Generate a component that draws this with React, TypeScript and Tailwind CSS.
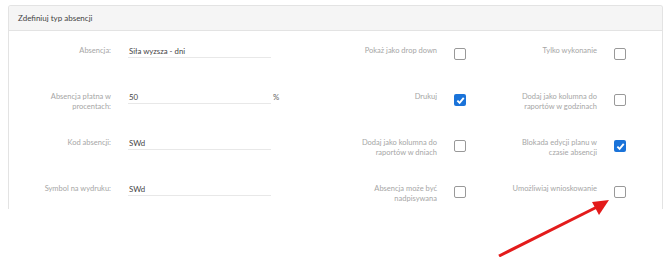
import React from "react";

type Check = { label: string[]; checked?: boolean };

type Row = {
  label: string[];
  value: string;
  suffix?: string;
  mid: Check;
  right: Check;
};

const rows: Row[] = [
  {
    label: ["Absencja:"],
    value: "Siła wyzsza - dni",
    mid: { label: ["Pokaż jako drop down"] },
    right: { label: ["Tylko wykonanie"] },
  },
  {
    label: ["Absencja płatna w", "procentach:"],
    value: "50",
    suffix: "%",
    mid: { label: ["Drukuj"], checked: true },
    right: { label: ["Dodaj jako kolumna do", "raportów w godzinach"] },
  },
  {
    label: ["Kod absencji:"],
    value: "SWd",
    mid: { label: ["Dodaj jako kolumna do", "raportów w dniach"] },
    right: { label: ["Blokada edycji planu w", "czasie absencji"], checked: true },
  },
  {
    label: ["Symbol na wydruku:"],
    value: "SWd",
    mid: { label: ["Absencja może być", "nadpisywana"] },
    right: { label: ["Umożliwiaj wnioskowanie"] },
  },
];

function Lines({ lines }: { lines: string[] }) {
  return (
    <>
      {lines.map((l, i) => (
        <div key={i}>{l}</div>
      ))}
    </>
  );
}

function Checkbox({ checked }: { checked?: boolean }) {
  if (checked) {
    return (
      <div className="mt-[2px] w-[12px] h-[12px] rounded-[2px] bg-[#1a73d9] flex items-center justify-center">
        <svg width="9" height="9" viewBox="0 0 10 10">
          <path d="M1.5 5.2 L4 7.6 L8.6 2.2" fill="none" stroke="white" strokeWidth="2.1" />
        </svg>
      </div>
    );
  }
  return <div className="mt-[2px] w-[12px] h-[12px] rounded-[2px] border border-[#999] bg-white" />;
}

function CheckField({ item }: { item: Check }) {
  return (
    <div className="flex items-start">
      <div className="w-[100px] text-right text-[#a6a6a6] text-[7.5px] leading-[10px] whitespace-nowrap">
        <Lines lines={item.label} />
      </div>
      <div className="ml-[17px]">
        <Checkbox checked={item.checked} />
      </div>
    </div>
  );
}

export default function App() {
  return (
    <div className="relative w-[670px] h-[257px] bg-white overflow-hidden" style={{ fontFamily: "Lato, 'Open Sans', sans-serif" }}>
      <div className="ml-[8px] mt-[5px] w-[655px] h-[204px] border-x border-t border-[#e3e3e3] rounded-t-[3px] overflow-hidden">
        <div className="h-[25px] bg-[#f5f5f5] border-b border-[#e3e3e3] flex items-center px-[9px] text-[8px] text-[#444]">
          Zdefiniuj typ absencji
        </div>
        <div className="pt-[15px]">
          {rows.map((r, i) => (
            <div key={i} className="h-[46px] flex items-start">
              <div className="w-[102px] text-right text-[#a6a6a6] text-[7.5px] leading-[10px]">
                <Lines lines={r.label} />
              </div>
              <div className="ml-[17px] w-[143px] h-[12px] border-b border-[#e8e8e8] text-[7.8px] leading-[10px] text-[#444] pl-[1px]">
                {r.value}
              </div>
              <div className="w-[10px] ml-[2px] text-[7.8px] leading-[10px] text-[#666]">{r.suffix}</div>
              <div className="ml-[54px]">
                <CheckField item={r.mid} />
              </div>
              <div className="ml-[31px]">
                <CheckField item={r.right} />
              </div>
            </div>
          ))}
        </div>
      </div>
      <svg className="absolute left-0 top-0 pointer-events-none" width="670" height="257">
        <line x1="499" y1="256" x2="597" y2="207" stroke="#e31b1b" strokeWidth="3" />
        <polygon points="609,200 592,202 599,215" fill="#e31b1b" />
      </svg>
    </div>
  );
}
